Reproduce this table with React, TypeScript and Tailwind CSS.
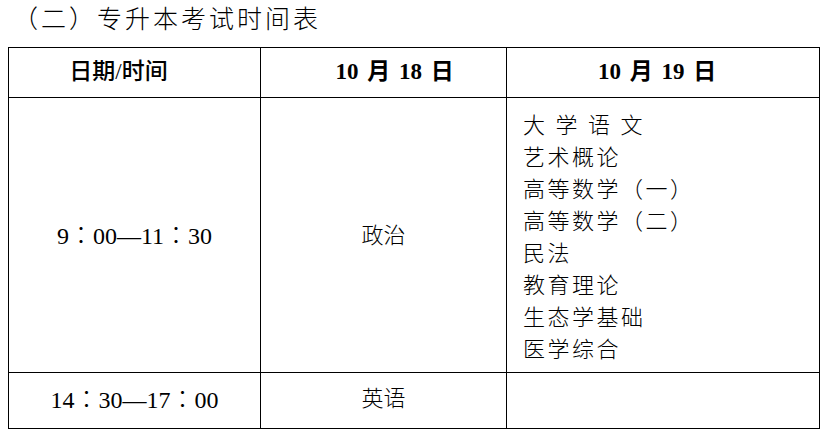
const subjects19 = [
  "大 学 语 文",
  "艺术概论",
  "高等数学（一）",
  "高等数学（二）",
  "民法",
  "教育理论",
  "生态学基础",
  "医学综合",
]

const font = "font-['Liberation_Serif','Noto_Sans_CJK_SC',serif]"

// full-width colon centred in its box, like the Song face in the original
function Colon() {
  return <span className="font-['Noto_Sans_CJK_TC',sans-serif]">：</span>
}

function Time({ from, to }: { from: [string, string]; to: [string, string] }) {
  return (
    <>
      {from[0]}
      <Colon />
      {from[1]}—{to[0]}
      <Colon />
      {to[1]}
    </>
  )
}

export default function App() {
  return (
    <div className={`w-[827px] h-[437px] bg-white text-black ${font}`}>
      <h1 className="pl-[13px] pt-[4px] h-[47px] text-[25px] leading-[32px] tracking-[3px] font-light">
        （二）专升本考试时间表
      </h1>

      <table className="ml-[8px] w-[811px] table-fixed border-collapse">
        <colgroup>
          <col className="w-[252px]" />
          <col className="w-[246px]" />
          <col className="w-[313px]" />
        </colgroup>
        <thead>
          <tr className="h-[50px] text-[23px]">
            <th className="border-[1.5px] border-black font-medium pr-[32px]">日期/时间</th>
            <th className="border-[1.5px] border-black font-bold [word-spacing:3px] pl-[22px]">10 月 18 日</th>
            <th className="border-[1.5px] border-black font-bold [word-spacing:3px] pr-[12px]">10 月 19 日</th>
          </tr>
        </thead>
        <tbody className="text-[22px] font-light">
          <tr className="h-[275px]">
            <td className="border-[1.5px] border-black text-center text-[24px]">
              <Time from={["9", "00"]} to={["11", "30"]} />
            </td>
            <td className="border-[1.5px] border-black text-center">政治</td>
            <td className="border-[1.5px] border-black align-top pl-[16px] pt-[12px]">
              <ul className="flex flex-col tracking-[2.5px] leading-[32px]">
                {subjects19.map((s) => (
                  <li key={s} className="whitespace-pre">{s}</li>
                ))}
              </ul>
            </td>
          </tr>
          <tr className="h-[56px]">
            <td className="border-[1.5px] border-black text-center text-[24px] pb-[4px]">
              <Time from={["14", "30"]} to={["17", "00"]} />
            </td>
            <td className="border-[1.5px] border-black text-center pb-[4px]">英语</td>
            <td className="border-[1.5px] border-black"></td>
          </tr>
        </tbody>
      </table>
    </div>
  )
}
